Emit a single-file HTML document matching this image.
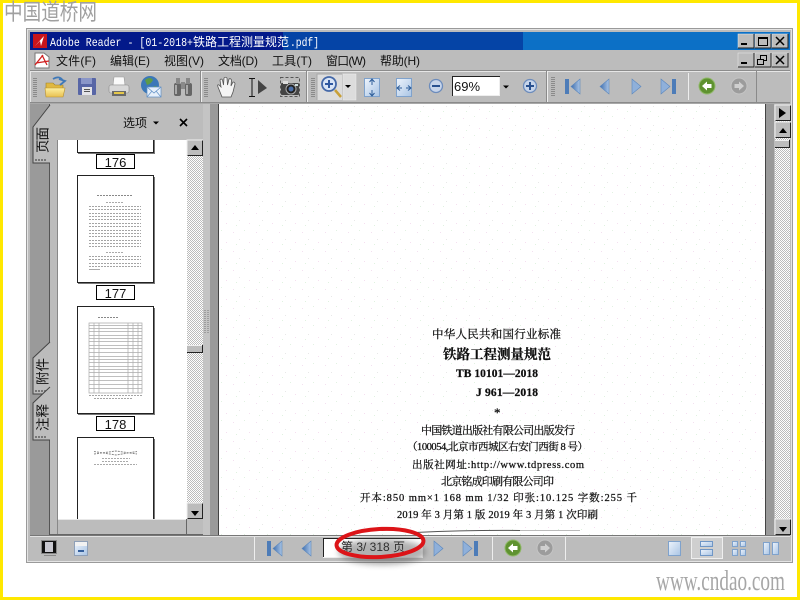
<!DOCTYPE html>
<html><head><meta charset="utf-8"><style>
html,body{margin:0;padding:0;background:#fff;width:800px;height:600px;overflow:hidden}
svg{display:block}
text{font-family:"Liberation Sans","Noto Sans CJK SC",sans-serif}
.m{font-family:"Liberation Sans","WenQuanYi Zen Hei","Noto Sans CJK SC",sans-serif;font-size:12px;fill:#111}
.t{font-family:"WenQuanYi Zen Hei","Noto Sans CJK SC",sans-serif;font-size:13.500px;fill:#111}
.s{font-family:"Liberation Serif","Noto Serif CJK SC",serif;fill:#111;font-size:11px;stroke:#111;stroke-width:.25px}
.l{font-family:"Liberation Sans",sans-serif;font-size:13px;fill:#111}
</style></head><body>
<svg width="800" height="600" viewBox="0 0 800 600" xmlns="http://www.w3.org/2000/svg">
<defs>
<pattern id="dith" width="2" height="2" patternUnits="userSpaceOnUse"><rect width="2" height="2" fill="#fff"/><rect width="1" height="1" fill="#bcbcbc"/><rect x="1" y="1" width="1" height="1" fill="#bcbcbc"/></pattern>
<pattern id="spk" width="23" height="19" patternUnits="userSpaceOnUse"><rect width="23" height="19" fill="#fff"/><rect x="3" y="4" width="1" height="1" fill="#f3e0f0"/><rect x="14" y="2" width="1" height="1" fill="#e2f2e2"/><rect x="9" y="11" width="1" height="1" fill="#e8e8e8"/><rect x="19" y="14" width="1" height="1" fill="#f5dff0"/><rect x="6" y="16" width="1" height="1" fill="#e0f2e0"/></pattern>
<linearGradient id="blu" x1="0" y1="0" x2="1" y2="1"><stop offset="0" stop-color="#eef4fc"/><stop offset="1" stop-color="#a9c4e4"/></linearGradient>
<linearGradient id="nav" x1="0" y1="0" x2="1" y2="0"><stop offset="0" stop-color="#3f6fb0"/><stop offset="1" stop-color="#a9c4e4"/></linearGradient>
<linearGradient id="fold" x1="0" y1="0" x2="0" y2="1"><stop offset="0" stop-color="#fdf0a0"/><stop offset="1" stop-color="#e8c050"/></linearGradient>
<filter id="bl" x="-30%" y="-60%" width="160%" height="220%"><feGaussianBlur stdDeviation="3"/></filter>
<filter id="sf"><feGaussianBlur stdDeviation="0.3"/></filter>
<g id="grip"><path d="M0 .5h4M0 2.500h4M0 4.500h4M0 6.500h4M0 8.500h4M0 10.500h4M0 12.500h4M0 14.500h4M0 16.500h4M0 18.500h4" stroke="#8a8a8a" stroke-width="1"/></g>
<g id="first"><rect x="0" y="0" width="4" height="15" fill="#4d7cb8"/><path d="M15 0V15L6 7.500Z" fill="url(#nav)" stroke="#5a86bd" stroke-width=".6"/></g>
<g id="prev"><path d="M9 0V15L0 7.500Z" fill="url(#nav)" stroke="#5a86bd" stroke-width=".6"/></g>
<g id="next"><path d="M0 0V15L9 7.500Z" fill="#8fb0da" stroke="#5a86bd" stroke-width=".6"/></g>
<g id="last"><path d="M0 0V15L9 7.500Z" fill="#8fb0da" stroke="#5a86bd" stroke-width=".6"/><rect x="11" y="0" width="4" height="15" fill="#4d7cb8"/></g>
<g id="back"><circle r="8" fill="#5f9230"/><circle r="8" fill="none" stroke="#8fb868"/><path d="M-5 0L0-4.500V-2H4.500V2H0V4.500Z" fill="#fff"/></g>
<g id="fwd"><circle r="8" fill="#9c9c9c"/><circle r="8" fill="none" stroke="#c4c4c4"/><path d="M5 0L0-4.500V-2H-4.500V2H0V4.500Z" fill="#d0d0d0"/></g>
<g id="sbtn"><rect width="16" height="16" fill="#bcbcbc"/><path d="M0 16V0H16" fill="none" stroke="#efefef"/><path d="M.5 15.500H15.500V.5" fill="none" stroke="#222"/></g>
<g id="pline"><path d="M0 0H52" stroke="#a4a4a4" stroke-dasharray="2 1"/></g>
</defs>

<rect width="800" height="600" fill="#fff"/>
<rect x="1.500" y="1.500" width="797" height="597" fill="none" stroke="#ffe800" stroke-width="3"/>
<text transform="translate(4 20) scale(1 1.200)" font-size="19" fill="#a0a0a0" textLength="93" lengthAdjust="spacingAndGlyphs" style="font-family:'WenQuanYi Zen Hei','Noto Sans CJK SC',sans-serif">中国道桥网</text>
<text x="656" y="590" fill="#a6a6a6" textLength="129" lengthAdjust="spacingAndGlyphs" style="font-family:'Liberation Serif',serif;font-size:28px">www.cndao.com</text>

<!-- window -->
<rect x="26.500" y="28.500" width="766" height="534" fill="#bcbcbc" stroke="#9a9a9a"/>
<rect x="27.500" y="29.500" width="764" height="532" fill="none" stroke="#e4e4e4"/>
<rect x="30" y="32" width="760" height="18" fill="#0c70c6"/>
<rect x="30" y="32" width="493" height="18" fill="#0544a6"/>
<rect x="30" y="32" width="253" height="18" fill="#03198a"/>
<rect x="33" y="34" width="14" height="14" fill="#c8141c"/><path d="M35 46L44 36L41 46L40 41Z" fill="#fff"/>
<g fill="#fff">
<text x="50" y="46" textLength="143" lengthAdjust="spacingAndGlyphs" style="font-family:'Liberation Mono',monospace;font-size:12px">Adobe Reader - [01-2018+</text>
<text x="193" y="46" font-size="12" textLength="96" style="font-family:'WenQuanYi Zen Hei','Noto Sans CJK SC',sans-serif">铁路工程测量规范</text>
<text x="290" y="46" textLength="29" lengthAdjust="spacingAndGlyphs" style="font-family:'Liberation Mono',monospace;font-size:12px">.pdf]</text>
</g>
<!-- window buttons -->
<g id="wb1">
<rect x="738" y="34" width="16" height="14" fill="#bcbcbc" stroke="#eee" stroke-width=".5"/><path d="M738 48H754V34" fill="none" stroke="#222"/><rect x="741" y="43" width="6" height="2" fill="#000"/>
<rect x="755" y="34" width="16" height="14" fill="#bcbcbc" stroke="#eee" stroke-width=".5"/><path d="M755 48H771V34" fill="none" stroke="#222"/><rect x="758.500" y="37.500" width="9" height="8" fill="none" stroke="#000"/><path d="M758 38H768" stroke="#000" stroke-width="2"/>
<rect x="772" y="34" width="16" height="14" fill="#bcbcbc" stroke="#eee" stroke-width=".5"/><path d="M772 48H788V34" fill="none" stroke="#222"/><path d="M776 37L784 45M784 37L776 45" stroke="#000" stroke-width="1.500"/>
</g>
<rect x="738" y="53" width="16" height="14" fill="#bcbcbc" stroke="#eee" stroke-width=".5"/><path d="M738 67H754V53" fill="none" stroke="#222"/><rect x="741" y="62" width="6" height="2" fill="#000"/>
<rect x="755" y="53" width="16" height="14" fill="#bcbcbc" stroke="#eee" stroke-width=".5"/><path d="M755 67H771V53" fill="none" stroke="#222"/><rect x="760.500" y="55.500" width="6" height="5" fill="none" stroke="#000"/><rect x="757.500" y="59.500" width="6" height="5" fill="#bcbcbc" stroke="#000"/>
<rect x="772" y="53" width="16" height="14" fill="#bcbcbc" stroke="#eee" stroke-width=".5"/><path d="M772 67H788V53" fill="none" stroke="#222"/><path d="M776 56L784 64M784 56L776 64" stroke="#000" stroke-width="1.500"/>

<!-- menu -->
<path d="M35 53H44L49 57V68H35Z" fill="#fff" stroke="#777"/><path d="M35 65L43 55M42 55L47 65M36 63L49 61" stroke="#d02020" stroke-width="1.300" fill="none"/>
<text class="m" x="56" y="65" textLength="40">文件(F)</text>
<text class="m" x="110" y="65" textLength="40">编辑(E)</text>
<text class="m" x="164" y="65" textLength="40">视图(V)</text>
<text class="m" x="218" y="65" textLength="40">文档(D)</text>
<text class="m" x="272" y="65" textLength="40">工具(T)</text>
<text class="m" x="326" y="65" textLength="40">窗口(W)</text>
<text class="m" x="380" y="65" textLength="40">帮助(H)</text>

<!-- toolbar -->
<path d="M30 70.500H790" stroke="#8c8c8c"/><path d="M30 71.500H790" stroke="#e6e6e6"/>
<path d="M30 102.500H790" stroke="#8a8a8a"/><path d="M30 103.500H790" stroke="#a8a8a8"/>
<path d="M30.500 71V102" stroke="#e6e6e6"/>
<path d="M200.500 71V102" stroke="#8a8a8a"/><path d="M201.500 71V102" stroke="#eee"/>
<path d="M306.500 71V102" stroke="#8a8a8a"/><path d="M307.500 71V102" stroke="#eee"/>
<path d="M546.500 71V102" stroke="#8a8a8a"/><path d="M547.500 71V102" stroke="#eee"/>
<path d="M756.500 71V102" stroke="#8a8a8a"/>
<use href="#grip" x="33" y="78"/><use href="#grip" x="204" y="78"/><use href="#grip" x="311" y="78"/><use href="#grip" x="551" y="77"/>
<path d="M688.500 73V100" stroke="#eee"/>

<!-- open -->
<path d="M46 83H53L55 85H63V96H46Z" fill="#e0b840" stroke="#a08020" stroke-width=".6"/><path d="M45 88H65L63 97H46Z" fill="url(#fold)" stroke="#b89030" stroke-width=".6"/>
<path d="M53 79Q60 75 63 81M60 85L65 81L59 79" fill="none" stroke="#3f78b8" stroke-width="1.800"/>
<!-- save -->
<rect x="78" y="78" width="18" height="17" rx="1" fill="#5866a6"/><rect x="81" y="78" width="11" height="6" fill="#8a96c8"/><rect x="82" y="87" width="10" height="8" fill="#e4e4e8"/><rect x="84" y="89" width="6" height="1" fill="#555"/><rect x="84" y="91" width="6" height="1" fill="#555"/>
<!-- print -->
<path d="M114 77H124L125 85H113Z" fill="#fafafa" stroke="#999" stroke-width=".6"/><rect x="109" y="85" width="20" height="8" rx="2" fill="#d8d8d8" stroke="#888" stroke-width=".6"/><rect x="112" y="91" width="14" height="5" fill="#6a6a6a"/><rect x="114" y="92" width="10" height="2" fill="#e6c84a"/>
<!-- email -->
<circle cx="150" cy="85" r="9" fill="#3c78b8"/><path d="M145 80Q150 76 153 80Q151 84 147 85ZM151 88Q156 84 158 88L155 92Z" fill="#5d9a48"/><rect x="147" y="87" width="14" height="10" fill="#e6effa" stroke="#5f8fc5" stroke-width=".7"/><path d="M147 87L154 93L161 87M147 97L152 91M161 97L156 91" fill="none" stroke="#5f8fc5" stroke-width=".7"/>
<!-- binoculars -->
<rect x="174" y="83" width="7" height="13" rx="2" fill="#666"/><rect x="185" y="83" width="7" height="13" rx="2" fill="#666"/><rect x="176" y="78" width="4" height="6" fill="#888"/><rect x="186" y="78" width="4" height="6" fill="#888"/><rect x="181" y="82" width="4" height="7" fill="#8a8a8a"/><rect x="175" y="85" width="2" height="9" fill="#aaa"/><rect x="186" y="85" width="2" height="9" fill="#aaa"/>
<!-- hand -->
<path d="M222 97L218 87Q217 84 219 85L221 87L220 80Q221 78 222.500 80L223.500 85L224 78Q225.500 76.500 227 78L227.500 85L229 79Q230.500 78 231.500 80L231 86L233 82Q235 82 235 84L233 92L231 97Z" fill="#f4f4f4" stroke="#555" stroke-width=".8"/>
<!-- select -->
<path d="M249 78.500H255M249 96.500H255M252 78V97" stroke="#111" fill="none"/><path d="M258 80L267 88L258 94Z" fill="#444"/>
<!-- camera -->
<rect x="280.500" y="77.500" width="19" height="19" fill="none" stroke="#555" stroke-dasharray="3 2"/><rect x="281" y="83" width="18" height="12" rx="1" fill="#444"/><rect x="283" y="81" width="5" height="3" fill="#ddd"/><circle cx="291" cy="89" r="5" fill="#222" stroke="#aaa"/><circle cx="291" cy="89" r="2.500" fill="#4a6ea8"/><rect x="295" y="84" width="3" height="2" fill="#cdd"/>
<!-- zoom tool -->
<rect x="317" y="74" width="25" height="26" fill="#dcdcdc"/><path d="M317 100V74H342" fill="none" stroke="#a8a8a8"/>
<rect x="343" y="74" width="13" height="26" fill="#dcdcdc" stroke="#eee" stroke-width=".5"/>
<path d="M335 90L341 97" stroke="#c8a038" stroke-width="2.500"/>
<circle cx="329" cy="84" r="7" fill="#d8e4f6" stroke="#4468a8" stroke-width="1.800"/><path d="M325 84H333M329 80V88" stroke="#2f58a0" stroke-width="2"/>
<path d="M345 85H351L348 88Z" fill="#000"/>
<!-- fit -->
<rect x="364.500" y="78.500" width="15" height="18" fill="url(#blu)" stroke="#7fa2cc"/><path d="M372 79V85M369.500 82L372 79L374.500 82M372 96V90M369.500 93L372 96L374.500 93" stroke="#2c5c98" fill="none"/>
<rect x="396.500" y="78.500" width="15" height="18" fill="url(#blu)" stroke="#7fa2cc"/><path d="M397 88H402M400 85.500L397 88L400 90.500M411 88H406M408 85.500L411 88L408 90.500" stroke="#2c5c98" fill="none"/>
<!-- zoom -/+ -->
<circle cx="436" cy="86" r="6.500" fill="#c6d4ea" stroke="#6c8cbc" stroke-width="1.300"/><rect x="432" y="85" width="8" height="2" fill="#28508f"/>
<rect x="452.500" y="76.500" width="47" height="19" fill="#fff" stroke="#eee"/><path d="M452.500 96V76.500H500" fill="none" stroke="#222"/>
<text x="454" y="91" font-size="13" fill="#111">69%</text>
<path d="M503 85.500H509L506 88.500Z" fill="#000"/>
<circle cx="530" cy="86" r="6.500" fill="#c6d4ea" stroke="#6c8cbc" stroke-width="1.300"/><path d="M526 86H534M530 82V90" stroke="#28508f" stroke-width="2"/>
<use href="#first" x="565" y="79"/><use href="#prev" x="600" y="79"/><use href="#next" x="632" y="79"/><use href="#last" x="661" y="79"/>
<use href="#back" x="707" y="86"/><use href="#fwd" x="739" y="86"/>

<!-- gutter + tabs -->
<rect x="30" y="104" width="20" height="431" fill="#9a9a9a"/>
<rect x="50" y="104" width="153" height="431" fill="#bcbcbc"/>
<path d="M49.500 104V535" stroke="#555"/>
<path d="M50 105L33 127V163H50Z" fill="#bcbcbc"/><path d="M50 105L33 127V163H50" fill="none" stroke="#444"/><path d="M35 160h2m1 0h2m1 0h2m1 0h2" stroke="#777" stroke-width="2"/>
<path d="M50 342L33 358V394H50Z" fill="#bcbcbc"/><path d="M50 342L33 358V394H50" fill="none" stroke="#444"/><path d="M35 391h2m1 0h2m1 0h2m1 0h2" stroke="#777" stroke-width="2"/>
<path d="M50 387L33 403V440H50Z" fill="#bcbcbc"/><path d="M50 387L33 403V440H50" fill="none" stroke="#444"/><path d="M35 437h2m1 0h2m1 0h2m1 0h2" stroke="#777" stroke-width="2"/>
<text class="t" transform="translate(47.500 153) rotate(-90)" textLength="26">页面</text>
<text class="t" transform="translate(47.500 385) rotate(-90)" textLength="27">附件</text>
<text class="t" transform="translate(47.500 431) rotate(-90)" textLength="27">注释</text>

<text class="m" x="123" y="127">选项</text><path d="M153 121.500H159L156 124.500Z" fill="#000"/>
<path d="M180 119L187 126M187 119L180 126" stroke="#000" stroke-width="1.600"/>

<!-- thumbs -->
<rect x="57" y="140" width="130" height="379" fill="#fff"/><path d="M57.500 140V535" stroke="#888"/>
<g fill="#fff" stroke="#222">
<path d="M77.500 140V152.500H153.500V140"/>
<rect x="77.500" y="175.500" width="76" height="107"/>
<rect x="77.500" y="306.500" width="76" height="107"/>
<path d="M77.500 519V437.500H153.500V519"/>
</g>
<path d="M154.500 140V153.500H78M154.500 177V283.500H78M154.500 308V414.500H78M154.500 439V519" fill="none" stroke="#777"/>
<g fill="#fff" stroke="#000"><rect x="96.500" y="154.500" width="38" height="14"/><rect x="96.500" y="285.500" width="38" height="14"/><rect x="96.500" y="416.500" width="38" height="14"/></g>
<text class="l" x="115.500" y="167" text-anchor="middle">176</text>
<text class="l" x="115.500" y="298" text-anchor="middle">177</text>
<text class="l" x="115.500" y="429" text-anchor="middle">178</text>
<!-- page 177 lines -->
<g>
<path d="M97 195.500H133" stroke="#888" stroke-dasharray="2 1"/><path d="M106 202.500H124" stroke="#aaa" stroke-dasharray="2 1"/>
<use href="#pline" x="89" y="206.500"/><use href="#pline" x="89" y="209.500"/><use href="#pline" x="89" y="213.500"/><use href="#pline" x="89" y="216.500"/><use href="#pline" x="89" y="219.500"/><use href="#pline" x="89" y="223.500"/><use href="#pline" x="89" y="226.500"/><use href="#pline" x="89" y="230.500"/><use href="#pline" x="89" y="233.500"/><use href="#pline" x="89" y="236.500"/><use href="#pline" x="89" y="240.500"/><use href="#pline" x="89" y="243.500"/><use href="#pline" x="89" y="246.500"/>
<path d="M106 252.500H124" stroke="#aaa" stroke-dasharray="2 1"/>
<use href="#pline" x="89" y="256.500"/><use href="#pline" x="89" y="259.500"/><use href="#pline" x="89" y="263.500"/><use href="#pline" x="89" y="266.500"/>
<path d="M89 269.500H100" stroke="#aaa"/>
</g>
<!-- page 178 table -->
<g fill="none" stroke="#aaa" stroke-width=".7">
<path d="M89 323H142V393H89Z M94 323V393M99 323V393M128 323V393M133 323V393M138 323V393"/>
<path d="M89 325.500H142M89 328.500H142M89 331.500H142M89 335.500H142M89 338.500H142M89 341.500H142M89 345.500H142M89 348.500H142M89 352.500H142M89 356.500H142M89 359.500H142M89 362.500H142M89 366.500H142M89 369.500H142M89 372.500H142M89 376.500H142M89 380.500H142M89 384.500H142M89 388.500H142"/>
<path d="M89 395.500H142M94 398.500H132" stroke="#888" stroke-dasharray="2 1"/>
</g>
<path d="M98 317.500H118" stroke="#888" stroke-dasharray="2 1"/>
<path d="M94 451.500L116 455L137 451.500M94 454L116 451L137 454" fill="none" stroke="#888" stroke-dasharray="2 1"/>
<path d="M102 458.500H130M102 461.500H128M94 464.500H137" stroke="#aaa" stroke-dasharray="2 1"/>

<!-- left scrollbar -->
<rect x="187" y="140" width="16" height="379" fill="url(#dith)"/>
<use href="#sbtn" x="187" y="140"/><path d="M191 150H199L195 145Z" fill="#000"/>
<use href="#sbtn" x="187" y="503"/><path d="M191 511H199L195 516Z" fill="#000"/>
<rect x="187" y="345" width="16" height="8" fill="#bcbcbc"/><path d="M187 345.500H203" stroke="#efefef"/><path d="M187 352.500H202.500V345" fill="none" stroke="#222"/>
<!-- horizontal strip -->
<rect x="58" y="519" width="129" height="15" fill="#bcbcbc"/><path d="M58 519.500H187" stroke="#e8e8e8"/><path d="M186.500 519V534" stroke="#666"/>
<path d="M50 534.500H203" stroke="#666"/>

<!-- splitter -->
<rect x="203" y="104" width="7" height="431" fill="#c4c4c4"/>
<path d="M205 310v24M208 310v24" stroke="#777" stroke-dasharray="1 1"/>
<rect x="210" y="104" width="9" height="431" fill="#9a9a9a"/>
<path d="M218.500 104V535" stroke="#444"/>

<!-- page -->
<rect x="219" y="104" width="546" height="431" fill="url(#spk)"/>
<rect x="765" y="104" width="9" height="431" fill="#9a9a9a"/>
<path d="M765.500 104V535" stroke="#444"/>
<g filter="url(#sf)">
<text class="s" x="432" y="338" textLength="129" style="font-size:11.500px">中华人民共和国行业标准</text>
<text class="s" x="443" y="359" textLength="108" style="font-size:13.500px;font-weight:700">铁路工程测量规范</text>
<text class="s" x="456" y="377" textLength="82" style="font-weight:700;font-size:11.500px">TB 10101—2018</text>
<text class="s" x="476" y="396" textLength="62" style="font-weight:700;font-size:11.500px">J 961—2018</text>
<text class="s" x="494" y="417" style="font-size:13px">*</text>
<text class="s" x="421" y="434" textLength="154">中国铁道出版社有限公司出版发行</text>
<text class="s" x="407" y="450" textLength="181" style="font-size:10.500px">（100054,北京市西城区右安门西街 8 号）</text>
<text class="s" x="412" y="468" textLength="172" style="font-size:10.500px">出版社网址:http://www.tdpress.com</text>
<text class="s" x="441" y="485" textLength="113">北京铭成印刷有限公司印</text>
<text class="s" x="360" y="501" textLength="277" style="font-size:10.500px">开本:850 mm×1 168 mm   1/32   印张:10.125   字数:255 千</text>
<text class="s" x="397" y="518" textLength="201" style="font-size:10.500px">2019 年 3 月第 1 版   2019 年 3 月第 1 次印刷</text>
</g>
<path d="M415 532.500Q470 530 520 530.500" stroke="#555" fill="none"/><path d="M520 530.500H580" stroke="#bbb"/>

<!-- right scrollbar -->
<rect x="774" y="104" width="16" height="431" fill="#bcbcbc"/>
<rect x="775" y="121" width="15" height="414" fill="url(#dith)"/>
<use href="#sbtn" x="775" y="105"/><path d="M779 108V118L786 113Z" fill="#000"/>
<use href="#sbtn" x="775" y="122"/><path d="M779 133H787L783 128Z" fill="#000"/>
<rect x="775" y="140" width="15" height="8" fill="#bcbcbc"/><path d="M775 140.500H790" stroke="#efefef"/><path d="M775 147.500H789.500V140" fill="none" stroke="#222"/>
<use href="#sbtn" x="775" y="519"/><path d="M779 527H787L783 532Z" fill="#000"/>

<!-- status bar -->
<path d="M30 535.500H790" stroke="#777"/><path d="M30 536.500H790" stroke="#e2e2e2"/>
<rect x="41.500" y="540.500" width="15" height="13" fill="#111" stroke="#888"/><rect x="45" y="542" width="8" height="10" fill="#c8c8d0"/><path d="M44 555.500H56" stroke="#8a8a8a"/>
<rect x="74.500" y="541.500" width="13" height="14" fill="url(#blu)" stroke="#8fa0b8"/><rect x="78" y="550" width="6" height="2" fill="#345f9c"/><rect x="75" y="542" width="12" height="4" fill="#f2f2f2"/>
<path d="M254.500 537V560" stroke="#eee"/>
<use href="#first" x="267" y="541"/><use href="#prev" x="302" y="541"/>
<rect x="323.500" y="538.500" width="99" height="19" fill="#fff" stroke="#eee"/><path d="M323.500 557V538.500H422" fill="none" stroke="#222"/>
<text x="341" y="551" font-size="12" fill="#111" textLength="64" style="font-family:'Liberation Sans','WenQuanYi Zen Hei','Noto Sans CJK SC',sans-serif">第 3/ 318 页</text>
<use href="#next" x="434" y="541"/><use href="#last" x="463" y="541"/>
<path d="M492.500 537V560" stroke="#eee"/>
<use href="#back" x="513" y="548"/><use href="#fwd" x="545" y="548"/>
<path d="M565.500 537V560" stroke="#eee"/>
<rect x="668.500" y="541.500" width="12" height="14" fill="url(#blu)" stroke="#7fa2cc"/>
<rect x="691.500" y="537.500" width="31" height="21" fill="#cfcfcf" stroke="#efefef"/>
<rect x="700.500" y="541.500" width="12" height="5" fill="url(#blu)" stroke="#6f96c6"/><rect x="700.500" y="549.500" width="12" height="6" fill="url(#blu)" stroke="#6f96c6"/>
<g fill="url(#blu)" stroke="#7fa2cc"><rect x="732.500" y="541.500" width="5" height="5"/><rect x="740.500" y="541.500" width="5" height="5"/><rect x="732.500" y="549.500" width="5" height="6"/><rect x="740.500" y="549.500" width="5" height="6"/><rect x="763.500" y="542.500" width="6" height="12"/><rect x="772.500" y="542.500" width="6" height="12"/></g>

<!-- red ellipse -->
<ellipse cx="382" cy="552" rx="44" ry="13" fill="#555" opacity=".45" filter="url(#bl)"/>
<ellipse cx="380" cy="543" rx="43.500" ry="14" fill="none" stroke="#dc1418" stroke-width="4" transform="rotate(-3 380 543)"/>
</svg>
</body></html>
